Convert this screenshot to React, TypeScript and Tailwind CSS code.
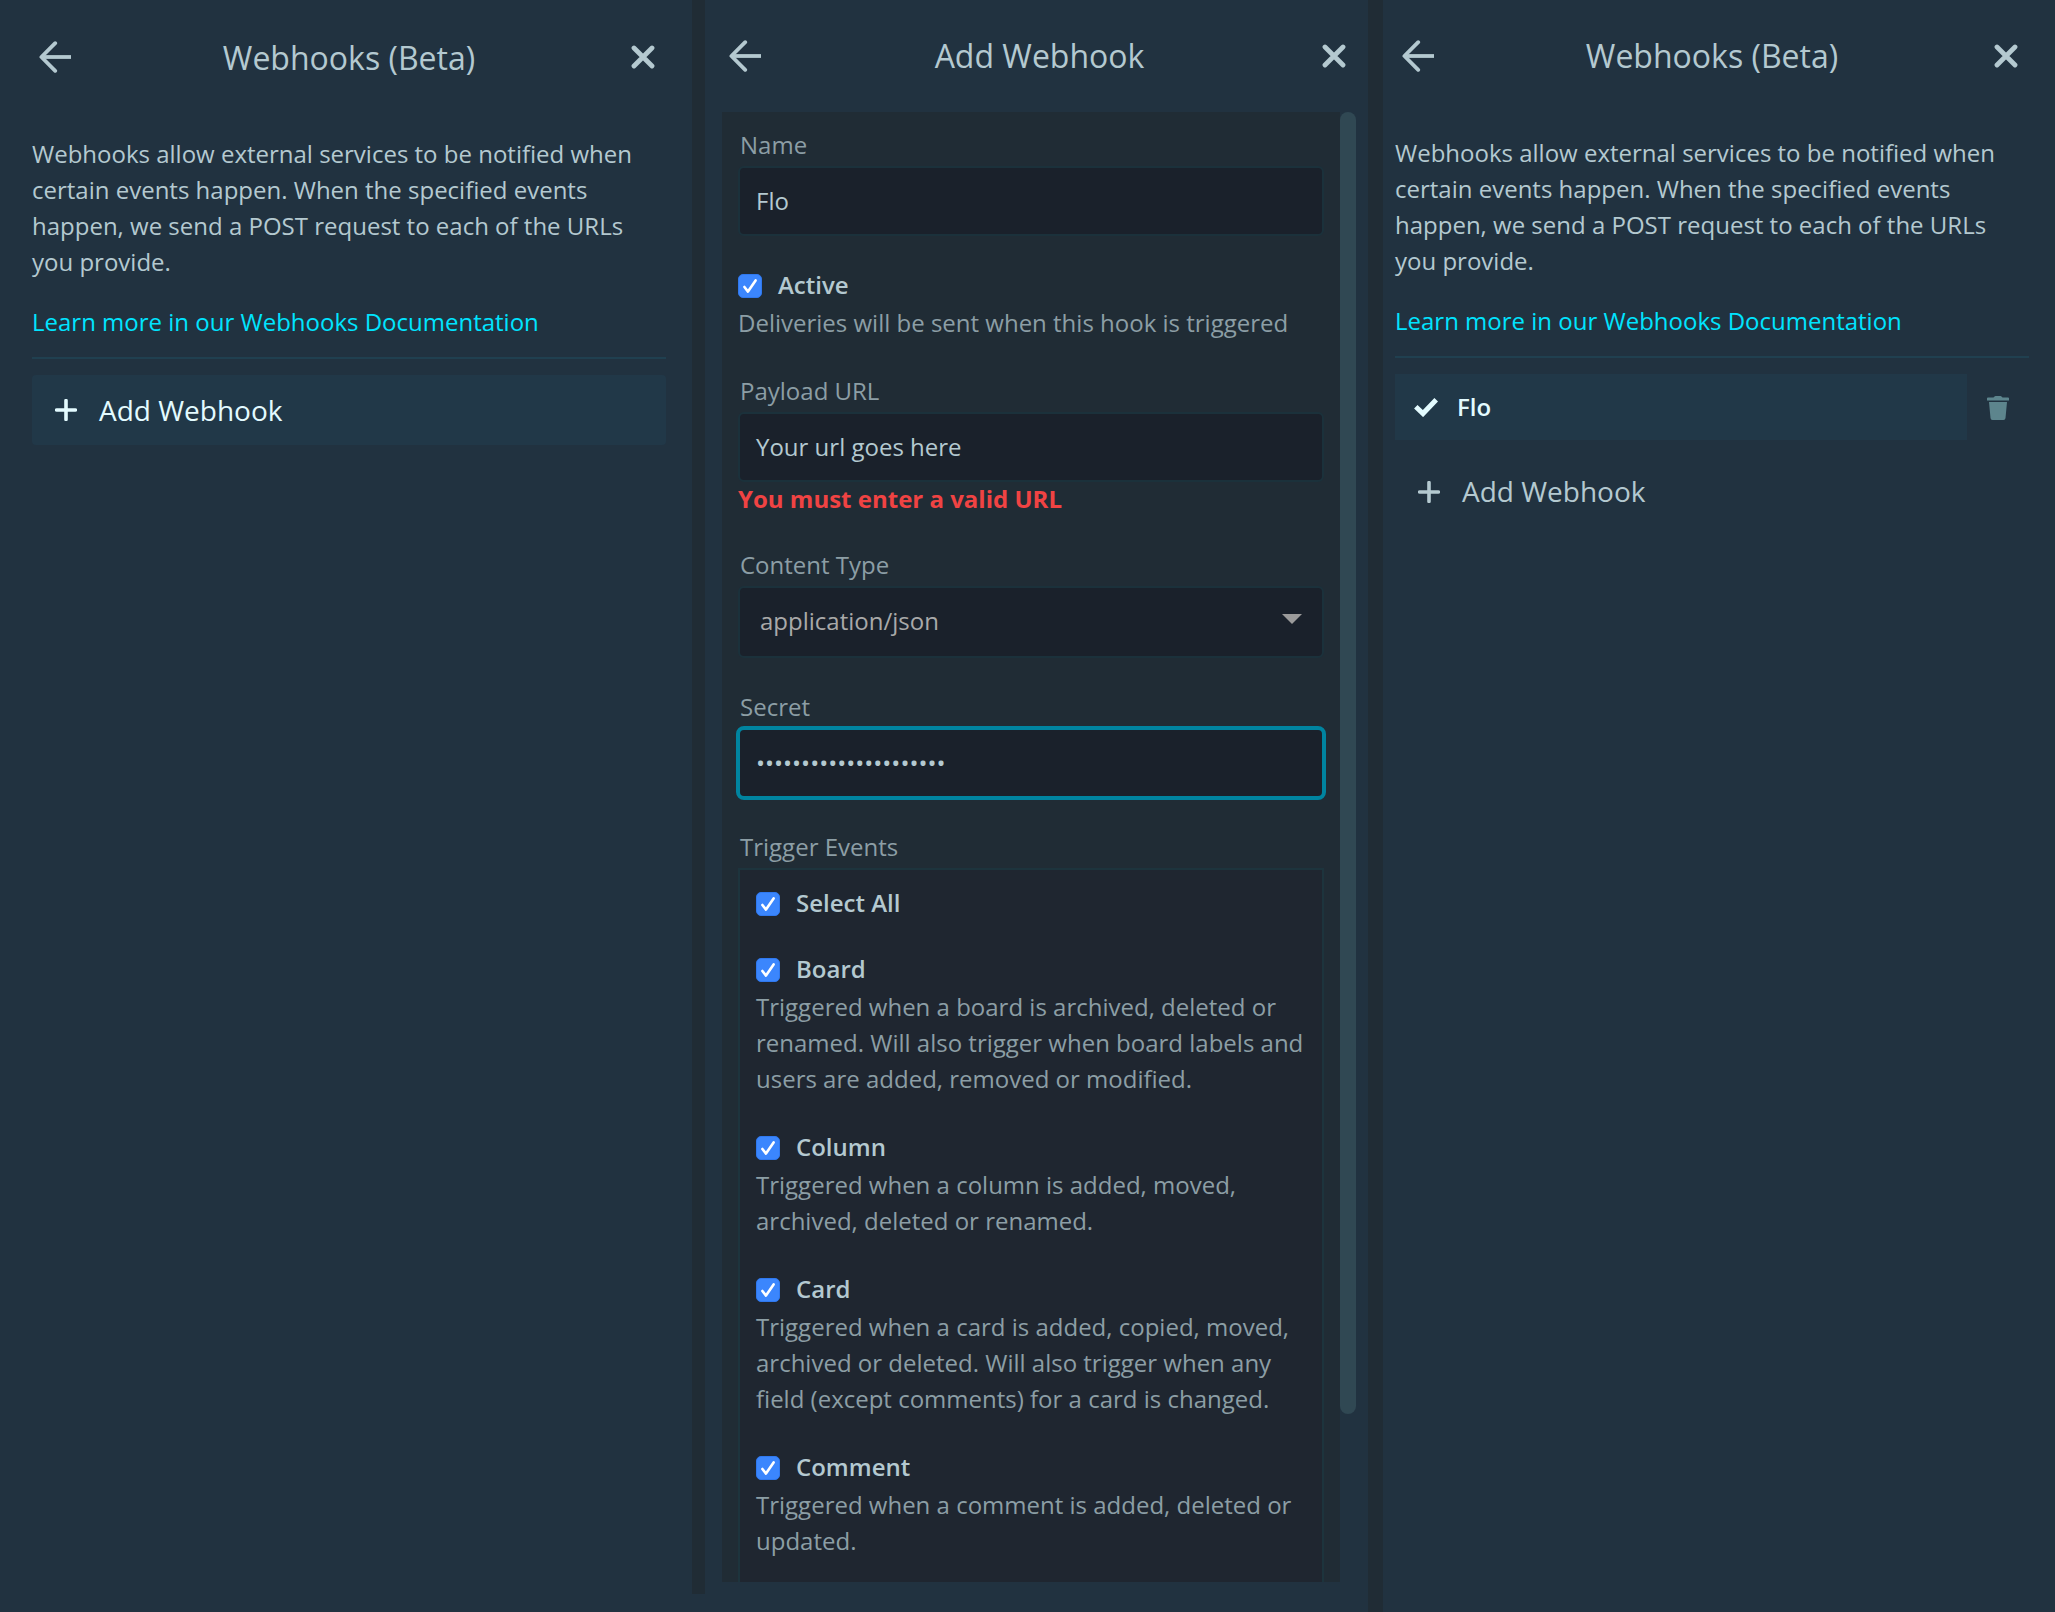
import type { ReactNode } from "react";

function BackIcon() {
  return (
    <svg className="block h-8 w-8" viewBox="0 0 32 32" fill="none" stroke="#b4c9d0" strokeWidth="3.8" strokeLinejoin="round">
      <path d="M2.5 16H32" />
      <path d="M16.2 2.2L2.4 16L16.2 29.8" strokeLinecap="round" />
    </svg>
  );
}

function CloseIcon() {
  return (
    <svg className="block h-6 w-6" viewBox="0 0 24 24" fill="none" stroke="#b4c9d0" strokeWidth="4.8" strokeLinecap="round">
      <path d="M3 3L21 21M21 3L3 21" />
    </svg>
  );
}

function PlusIcon() {
  return (
    <svg className="block h-[22px] w-[22px]" viewBox="0 0 22 22" fill="none" stroke="currentColor" strokeWidth="3.6" strokeLinecap="round">
      <path d="M1.6 11H20.4M11 1.6V20.4" />
    </svg>
  );
}

function Checkbox() {
  return (
    <span className="flex h-6 w-6 shrink-0 items-center justify-center rounded-[5px] border border-[#2f78ee] bg-[#3b86fd]">
      <svg className="h-6 w-6 shrink-0" viewBox="0 0 24 24" fill="none" stroke="#fff" strokeWidth="2.6" strokeLinecap="round" strokeLinejoin="round">
        <path d="M6.4 13L10 17.6L17.6 6.4" />
      </svg>
    </span>
  );
}

function Header({ title, className, titleClassName = "" }: { title: string; className: string; titleClassName?: string }) {
  return (
    <header className={"flex items-center justify-between " + className}>
      <BackIcon />
      <h1 className={"mr-1 text-[32px] leading-[44px] text-[#b4c9d0] " + titleClassName}>{title}</h1>
      <CloseIcon />
    </header>
  );
}

function Intro() {
  return (
    <>
      <p className="whitespace-nowrap text-[#b4c9d0]">
        Webhooks allow external services to be notified when
        <br />
        certain events happen. When the specified events
        <br />
        happen, we send a POST request to each of the URLs
        <br />
        you provide.
      </p>
      <a className="mt-6 block text-[#00e4ff]">Learn more in our Webhooks Documentation</a>
      <div className="mt-[17px] h-0.5 bg-[#204050]" />
    </>
  );
}

function Label({ children }: { children: ReactNode }) {
  return <div className="h-[39px] pl-0.5 text-[#8c9ea5]">{children}</div>;
}

function Option({ name, lines }: { name: string; lines: string[] }) {
  return (
    <div className="mb-8">
      <div className="flex h-[38px] gap-4">
        <div className="pt-[7px]">
          <Checkbox />
        </div>
        <span className="font-semibold text-[#b4c9d0]">{name}</span>
      </div>
      {lines.map((line) => (
        <div key={line} className="whitespace-nowrap text-[#8c9ea5]">
          {line}
        </div>
      ))}
    </div>
  );
}

const field = "flex items-center rounded-md border-2 border-[#1b313b] bg-[#1a212b]";

const events = [
  {
    name: "Board",
    lines: [
      "Triggered when a board is archived, deleted or",
      "renamed. Will also trigger when board labels and",
      "users are added, removed or modified.",
    ],
  },
  { name: "Column", lines: ["Triggered when a column is added, moved,", "archived, deleted or renamed."] },
  {
    name: "Card",
    lines: [
      "Triggered when a card is added, copied, moved,",
      "archived or deleted. Will also trigger when any",
      "field (except comments) for a card is changed.",
    ],
  },
  { name: "Comment", lines: ["Triggered when a comment is added, deleted or", "updated."] },
];

export default function App() {
  return (
    <div className="flex h-[1612px] w-[2055px] overflow-hidden bg-[#213240] font-['Open_Sans',sans-serif] text-2xl leading-9">
      <section className="w-[692px] shrink-0 pr-[26px] pl-8">
        <Header title="Webhooks (Beta)" className="h-[136px] pr-[11px] pb-[22px] pl-[7px]" titleClassName="pt-0.5" />
        <Intro />
        <button className="mt-4 flex h-[70px] w-full items-center gap-[22px] rounded-sm bg-[#213848] pl-[23px] text-[28px] text-[#e3fbff]">
          <PlusIcon />
          Add Webhook
        </button>
      </section>

      <div className="h-[1594px] w-[13px] shrink-0 bg-[#202c35]" />

      <section className="w-[663px] shrink-0">
        <Header title="Add Webhook" className="h-28 pr-[22px] pl-6" />
        <div className="ml-[17px] flex">
          <div className="h-[1470px] w-[618px] overflow-hidden bg-[#202c35] px-4 pt-[15px]">
            <Label>Name</Label>
            <div className={field + " h-[70px] px-4 text-[#b4c9d0]"}>Flo</div>
            <div className="mt-[31px]">
              <Option name="Active" lines={["Deliveries will be sent when this hook is triggered"]} />
            </div>
            <Label>Payload URL</Label>
            <div className={field + " h-[70px] px-4 text-[#b4c9d0]"}>Your url goes here</div>
            <div className="mt-[-1px] mb-[30px] font-bold text-[#f04343]">You must enter a valid URL</div>
            <Label>Content Type</Label>
            <div className={field + " h-[72px] justify-between px-5 text-[#a9a9a9]"}>
              <span className="pb-0.5">application/json</span>
              <svg className="mb-1.5 h-2.5 w-5" viewBox="0 0 20 10" fill="#9b9b9b">
                <path d="M0 0H20L10 10Z" />
              </svg>
            </div>
            <div className="h-[31px]" />
            <Label>Secret</Label>
            <div className="mx-[-2px] mt-[-2px] flex h-[74px] items-center rounded-lg border-4 border-[#0084a0] bg-[#1a212b] px-4 text-[#b4c9d0]">
              •••••••••••••••••••••
            </div>
            <div className="h-[29px]" />
            <Label>Trigger Events</Label>
            <div className="h-[760px] border-2 border-[#1d343d] bg-[#1f2630] px-4 pt-[15px]">
              <div className="mb-[-4px]">
                <Option name="Select All" lines={[]} />
              </div>
              {events.map((e) => (
                <Option key={e.name} name={e.name} lines={e.lines} />
              ))}
            </div>
          </div>
          <div className="h-[1302px] w-4 rounded-full bg-[#304853]" />
        </div>
      </section>

      <div className="w-[15px] shrink-0 bg-[#202c35]" />

      <section className="w-[672px] shrink-0 pr-[26px] pl-3">
        <Header title="Webhooks (Beta)" className="h-[135px] pr-[11px] pb-[23px] pl-[7px]" />
        <Intro />
        <div className="mt-4 flex items-center">
          <div className="flex h-[66px] w-[572px] items-center bg-[#213848] pl-[19px] font-semibold text-[#e3fbff]">
            <svg className="mr-[19px] h-[19px] w-6" viewBox="0 0 24 19" fill="none" stroke="currentColor" strokeWidth="5">
              <path d="M1.8 8.8L9 15.6L22.2 1.8" />
            </svg>
            Flo
          </div>
          <svg className="mt-0.5 ml-5 h-6 w-[22px]" viewBox="0 0 22 24" fill="#5d858d">
            <path d="M0 2.2Q0 1.5 1 1.5H6.5Q7.5 0 8.5 0H13.5Q14.5 0 15.5 1.5H21Q22 1.5 22 2.2V4.5H0ZM2 6H20L18.5 22Q18.3 24 16.5 24H5.5Q3.7 24 3.5 22Z" />
          </svg>
        </div>
        <button className="mt-[17px] flex h-[70px] w-full items-center gap-[22px] pl-[23px] text-[28px] text-[#b4c9d0]">
          <PlusIcon />
          <span className="pb-0.5">Add Webhook</span>
        </button>
      </section>
    </div>
  );
}
